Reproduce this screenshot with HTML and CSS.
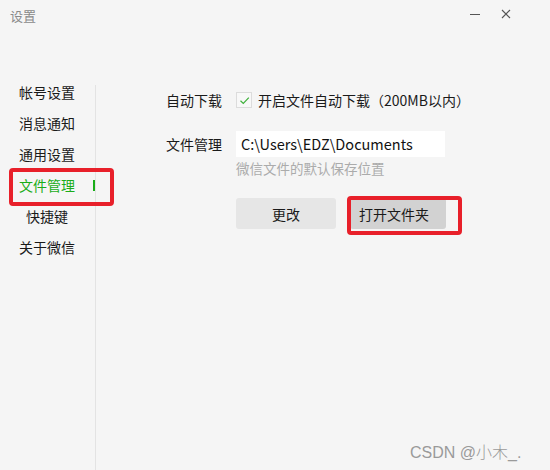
FILE: index.html
```html
<!DOCTYPE html>
<html lang="zh">
<head>
<meta charset="utf-8">
<link rel="stylesheet" href="styles.css">
</head>
<body>
<div class="window">
  <header class="titlebar">
    <span class="title">设置</span>
    <div class="controls">
      <svg class="ctl" width="12" height="12" viewBox="0 0 12 12"><line x1="1" y1="6.5" x2="11" y2="6.5" stroke="#555" stroke-width="1"/></svg>
      <svg class="ctl" width="12" height="12" viewBox="0 0 12 12"><path d="M2 2L10 10M10 2L2 10" stroke="#555" stroke-width="1.1" fill="none"/></svg>
    </div>
  </header>
  <div class="main">
    <nav class="sidebar">
      <div class="item">帐号设置</div>
      <div class="item">消息通知</div>
      <div class="item">通用设置</div>
      <div class="item active">文件管理<span class="bar"></span><span class="mark"></span></div>
      <div class="item">快捷键</div>
      <div class="item">关于微信</div>
    </nav>
    <section class="content">
      <div class="row">
        <span class="label">自动下载</span>
        <span class="check"><svg width="13" height="13" viewBox="0 0 13 13"><path d="M2.5 6.8L5.3 9.4L10.8 3.6" stroke="#3db03a" stroke-width="1.2" fill="none"/></svg></span>
        <span class="check-text">开启文件自动下载（200MB以内）</span>
      </div>
      <div class="row row-input">
        <span class="label">文件管理</span>
        <div class="input">C:\Users\EDZ\Documents</div>
      </div>
      <div class="hint">微信文件的默认保存位置</div>
      <div class="buttons">
        <button class="btn">更改</button>
        <button class="btn btn-dark">打开文件夹<span class="mark mark-btn"></span></button>
      </div>
    </section>
  </div>
  <div class="watermark">CSDN @小木_.</div>
</div>
</body>
</html>
```
FILE: styles.css
```css
* { box-sizing: border-box; }
html, body { margin: 0; padding: 0; }
body {
  width: 550px;
  height: 470px;
  background: #f5f5f5;
  font-family: "Noto Sans CJK SC", "Noto Sans", sans-serif;
  color: #1a1a1a;
  overflow: hidden;
}
.window {
  position: relative;
  width: 550px;
  height: 470px;
  display: flex;
  flex-direction: column;
}
.titlebar {
  height: 84px;
  display: flex;
  align-items: flex-start;
  justify-content: space-between;
  padding: 7px 38px 0 10px;
}
.title {
  font-size: 13px;
  line-height: 18px;
  color: #8a8a8a;
}
.controls {
  display: flex;
  gap: 19px;
  padding-top: 1px;
}
.ctl { display: block; }
.main {
  flex: 1;
  display: flex;
}
.sidebar {
  width: 96px;
  border-right: 1px solid #e3e3e3;
  margin-top: 1px;
  display: flex;
  flex-direction: column;
}
.item {
  position: relative;
  height: 31px;
  line-height: 17px;
  font-size: 14px;
  text-align: center;
  padding-right: 1px;
  color: #1a1a1a;
}
.item:first-child { margin-top: -1px; }
.item.active { color: #1aad19; }
.bar {
  position: absolute;
  right: 0;
  top: 3px;
  width: 2px;
  height: 11px;
  background: #1aad19;
}
.mark {
  position: absolute;
  left: 9px;
  top: -9px;
  width: 105px;
  height: 38px;
  border: 4px solid #e8202a;
  border-radius: 4px;
}
.content {
  flex: 1;
  padding: 6px 0 0 70px;
  display: flex;
  flex-direction: column;
}
.row {
  display: flex;
  align-items: center;
  height: 20px;
  font-size: 14px;
}
.label {
  width: 70px;
  flex: none;
}
.check {
  width: 16px;
  height: 16px;
  border: 1px solid #dcdcdc;
  background: #f8f8f8;
  display: flex;
  align-items: center;
  justify-content: center;
  margin-right: 6px;
}
.check svg { display: block; }
.row-input {
  height: 26px;
  margin-top: 21px;
}
.input {
  width: 209px;
  height: 26px;
  background: #ffffff;
  line-height: 26px;
  padding-left: 5px;
  font-size: 14.5px;
  color: #111;
}
.hint {
  margin-left: 70px;
  margin-top: 1px;
  line-height: 20px;
  font-size: 13.5px;
  color: #ababab;
}
.buttons {
  margin-left: 70px;
  margin-top: 20px;
  display: flex;
  gap: 10px;
}
.btn {
  position: relative;
  width: 100px;
  height: 31px;
  border: none;
  border-radius: 3px;
  background: #e6e6e6;
  font-family: inherit;
  font-size: 14px;
  color: #1a1a1a;
  padding: 0;
}
.btn-dark {
  background: #d2d2d2;
  width: 96px;
  margin-left: 4px;
  padding-right: 8px;
}
.mark-btn {
  left: -3px;
  top: -2px;
  width: 115px;
  height: 39px;
}
.watermark {
  position: absolute;
  left: 410px;
  top: 439px;
  font-family: "Liberation Sans", "Noto Sans CJK SC", sans-serif;
  font-size: 16px;
  font-weight: 300;
  color: #9a9a9a;
}
```
